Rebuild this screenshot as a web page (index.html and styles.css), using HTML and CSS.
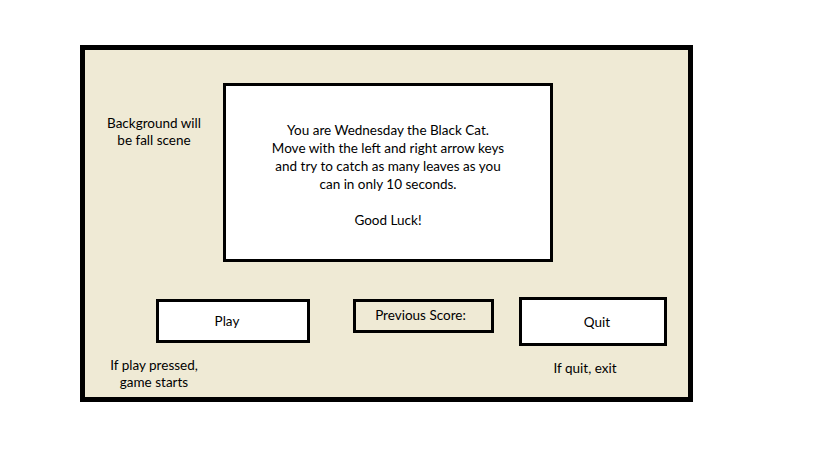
FILE: index.html
```html
<!DOCTYPE html>
<html lang="en">
<head>
    <meta charset="UTF-8">
    <meta name="viewport" content="width=device-width, initial-scale=1.0">
    <title>Wednesday the Black Cat - Start Screen</title>
    <link rel="stylesheet" href="styles.css">
</head>
<body>
<div class="frame">
    <div class="top-row">
        <p class="note note-bg">Background will<br>be fall scene</p>
        <div class="dialog">
            <p>You are Wednesday the Black Cat.<br>
            Move with the left and right arrow keys<br>
            and try to catch as many leaves as you<br>
            can in only 10 seconds.</p>
            <p>Good Luck!</p>
        </div>
    </div>
    <div class="button-row">
        <button class="box btn-play">Play</button>
        <div class="box score">Previous Score:</div>
        <button class="box btn-quit">Quit</button>
    </div>
    <div class="note-row">
        <p class="note note-play">If play pressed,<br>game starts</p>
        <p class="note note-quit">If quit, exit</p>
    </div>
</div>
</body>
</html>
```

FILE: styles.css
```css
body {
    font-family: Lato, "Open Sans", sans-serif;
    font-size: 13.5px;
    color: #000;
    background-color: #fff;
    margin: 0;
}
p {
    margin: 0;
}
.frame {
    width: 603px;
    height: 347px;
    margin: 45px 0 0 80px;
    border: 5px solid #000;
    background-color: #efead5;
}
.top-row {
    display: flex;
    padding-top: 33px;
}
.note {
    text-align: center;
    line-height: 17px;
}
.note-bg {
    width: 138px;
    padding-top: 32px;
}
.dialog {
    box-sizing: border-box;
    width: 330px;
    height: 179px;
    padding-top: 35px;
    border: 3px solid #000;
    background: #fff;
    text-align: center;
    line-height: 18px;
}
.dialog p + p {
    margin-top: 18px;
}
.button-row {
    display: flex;
    align-items: flex-start;
    margin-top: 35px;
}
.box {
    box-sizing: border-box;
    display: flex;
    align-items: center;
    justify-content: center;
    border: 3px solid #000;
    font-family: inherit;
    font-size: 13.5px;
    color: #000;
    padding: 0;
}
button.box {
    background: #fff;
    cursor: pointer;
}
.btn-play {
    width: 154px;
    height: 44px;
    margin: 2px 0 0 71px;
    padding-right: 12px;
}
.score {
    width: 141px;
    height: 34px;
    margin: 2px 0 0 43px;
    padding: 0 6px 3px 0;
    background: #efead5;
}
.btn-quit {
    width: 148px;
    height: 49px;
    margin-left: 25px;
    padding-left: 8px;
}
.note-row {
    display: flex;
    align-items: flex-start;
    margin-top: 11px;
}
.note-play {
    width: 138px;
}
.note-quit {
    width: 148px;
    margin: 3px 0 0 288px;
}
```
